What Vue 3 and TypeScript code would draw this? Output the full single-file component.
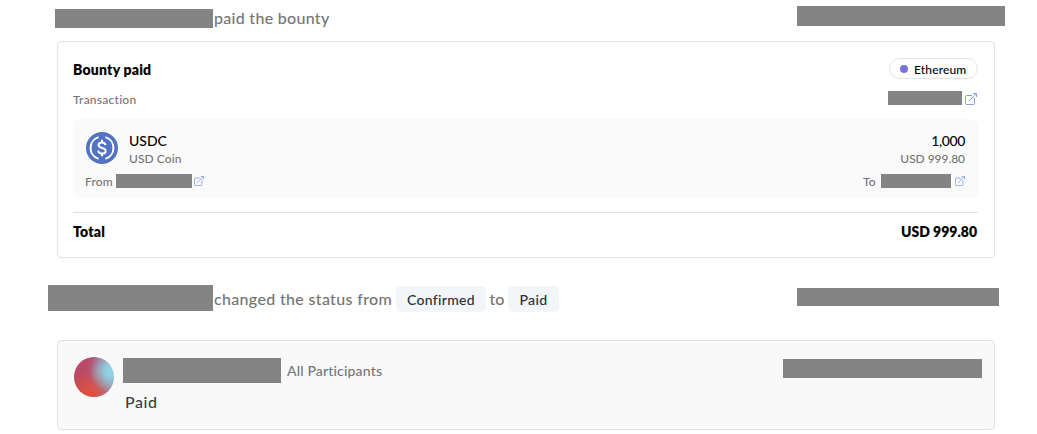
<script setup lang="ts">
import { defineComponent, h } from 'vue'

interface StatusChange { from: string; to: string }
const status: StatusChange = { from: 'Confirmed', to: 'Paid' }
const total = 'USD 999.80'

const LinkIcon = defineComponent({
  props: { size: { type: Number, default: 12 } },
  setup(props) {
    return () => h('svg', { width: props.size, height: props.size, viewBox: '0 0 12 12', fill: 'none', stroke: '#7f9be8', 'stroke-width': 0.95 }, [
      h('path', { d: 'M7 2.5H1.6Q.5 2.5.5 3.6V10.4Q.5 11.5 1.6 11.5H8.4Q9.5 11.5 9.5 10.4V5M3.7 8.3 11.3.7M8 .5H11.5V4' }),
    ])
  },
})
</script>

<template>
  <main class="timeline">
    <header class="event event-paid">
      <span class="mask author"></span>
      <span class="action paid-action">paid the bounty</span>
      <span class="mask date"></span>
    </header>

    <section class="card bounty">
      <div class="row heading">
        <strong class="bold bounty-title">Bounty paid</strong>
        <span class="network"><i class="dot"></i><span>Ethereum</span></span>
      </div>
      <div class="row transaction">
        <span class="small">Transaction</span>
        <span class="link"><span class="mask hash"></span><LinkIcon :size="12" /></span>
      </div>
      <div class="payment">
        <div class="asset">
          <svg class="coin" width="32" height="32" viewBox="0 0 32 32">
            <circle cx="16" cy="16" r="16" fill="#5272c3" />
            <g fill="none" stroke="#fff" stroke-width="2">
              <path d="M12.6 5.1A11.4 11.4 0 0 0 12.6 26.9M19.4 5.1A11.4 11.4 0 0 1 19.4 26.9" />
              <path d="M19.5 13.1C19.4 11.3 18 10.4 16 10.4C13.9 10.4 12.5 11.5 12.5 13.1C12.5 17 19.7 14.8 19.7 18.9C19.7 20.5 18.2 21.5 16 21.5C13.7 21.5 12.3 20.5 12.3 18.6M16 7.8V10.4M16 21.5V24.2" />
            </g>
          </svg>
          <div class="asset-name">
            <span class="token">USDC</span>
            <span class="small coin-name">USD Coin</span>
          </div>
          <div class="amount">
            <span class="token number">1,000</span>
            <span class="small value">{{ total }}</span>
          </div>
        </div>
        <div class="row parties">
          <span class="link"><span class="small from">From</span><span class="mask sender"></span><LinkIcon :size="10" /></span>
          <span class="link"><span class="small to-label">To</span><span class="mask receiver"></span><LinkIcon :size="10" /></span>
        </div>
      </div>
      <div class="row total">
        <strong class="bold total-label">Total</strong>
        <strong class="bold total-value">{{ total }}</strong>
      </div>
    </section>

    <div class="event event-status">
      <span class="mask author"></span>
      <span class="action changed">changed the status from</span>
      <span class="chip confirmed">{{ status.from }}</span>
      <span class="action to">to</span>
      <span class="chip paid">{{ status.to }}</span>
      <span class="mask date"></span>
    </div>

    <article class="card comment">
      <span class="avatar"></span>
      <div class="comment-body">
        <div class="comment-head">
          <span class="mask author"></span>
          <span class="audience">All Participants</span>
          <span class="mask date"></span>
        </div>
        <p>Paid</p>
      </div>
    </article>
  </main>
</template>

<style>
body { margin: 0; background: #fff; overflow: hidden; }
</style>

<style scoped>
.timeline { width: 1037px; height: 434px; box-sizing: border-box; font-family: Lato, "Open Sans", sans-serif; font-weight: 500; color: #050505; font-variant-ligatures: none; overflow: hidden; }
.timeline *, .card { box-sizing: border-box; }
.mask { display: block; flex: none; background: #848484; }
.row, .event, .link, .network, .asset, .comment-head { display: flex; }
.row { justify-content: space-between; }
.event, .action { white-space: nowrap; }
.action { font-size: 16px; line-height: 20px; color: #757575; }
.date { margin-left: auto; }
.event-paid { height: 41px; padding: 6px 32px 0 55px; }
.event-paid .author { width: 158px; height: 19px; margin-top: 3px; }
.event-paid .date { width: 208px; height: 20px; }
.paid-action { margin: 2px 0 0 1px; letter-spacing: .29px; }
.card { width: 938px; margin-left: 57px; border: 1px solid #e2e2e2; border-radius: 4px; }
.bounty { height: 217px; padding: 16px 16px 0 15px; }
.bold { font-size: 14px; line-height: 18px; font-weight: 800; }
.small { font-size: 12px; line-height: 16px; color: #757575; letter-spacing: .2px; white-space: nowrap; }
.heading { height: 33px; }
.bounty-title { margin-top: 3px; letter-spacing: .2px; }
.network { width: 89px; height: 21px; border: 1px solid #e2e4ec; border-radius: 11px; padding-left: 10px; align-items: center; font-size: 12px; line-height: 16px; letter-spacing: .15px; }
.network span { margin-top: 2px; }
.dot { width: 8px; height: 8px; margin-right: 6px; border-radius: 50%; background: #7774d9; }
.transaction { height: 28px; align-items: flex-start; }
.transaction > .small { margin-top: 1px; letter-spacing: .25px; }
.transaction .link { margin-right: 1px; }
.hash { width: 74px; height: 14px; margin-right: 3px; }
.transaction svg { margin-top: 2px; }
.payment { height: 79px; margin-right: -1px; padding: 13px 14px 0 12px; border-radius: 8px; background: #fafafa; }
.asset { height: 42px; }
.coin { margin: 0 11px 0 1px; }
.asset-name, .amount { display: flex; flex-direction: column; }
.amount { margin-left: auto; align-items: flex-end; }
.token { font-size: 14px; line-height: 18px; }
.number { letter-spacing: -.4px; }
.coin-name { margin-top: 1px; letter-spacing: .07px; }
.value { margin-top: 1px; letter-spacing: -.05px; }
.parties { height: 18px; }
.parties .link { height: 16px; align-items: flex-start; }
.parties .mask { height: 14px; }
.parties svg { margin-top: 2px; }
.from { width: 31px; }
.sender { width: 76px; margin-right: 2px; }
.to-label { width: 18px; }
.receiver { width: 70px; margin-right: 4px; }
.total { margin-top: 14px; padding: 10px 1px 0 0; border-top: 1px solid #dedede; }
.total-label { letter-spacing: .2px; }
.event-status { height: 82px; padding: 27px 38px 0 48px; }
.event-status .author { width: 165px; height: 26px; }
.event-status .date { width: 202px; height: 18px; margin-top: 3px; }
.changed { width: 182px; margin: 4px 0 0 1px; letter-spacing: .33px; }
.chip { height: 26px; margin-top: 1px; border-radius: 5px; background: #f3f6f9; color: #28303a; font-size: 14px; line-height: 28px; text-align: center; }
.confirmed { width: 90px; letter-spacing: .3px; }
.to { width: 22px; margin-top: 4px; text-align: center; }
.paid { width: 51px; letter-spacing: .4px; }
.comment { display: flex; height: 90px; padding: 16px 12px 0 16px; background: #f9f9f9; }
.avatar { width: 40px; height: 40px; border-radius: 50%; background: radial-gradient(circle at 94% 35%, #91d0e0 0 12%, transparent 48%), radial-gradient(circle at 38% 95%, #df4f3e 0 10%, transparent 56%), linear-gradient(100deg, #b84b67 30%, #9a83a5 80%); }
.comment-body { flex: 1; margin-left: 9px; }
.comment-head { height: 26px; }
.comment .author { width: 158px; height: 25px; margin-top: 1px; }
.comment .date { width: 199px; height: 19px; margin-top: 2px; }
.audience { margin: 5px 0 0 6px; font-size: 14px; line-height: 18px; color: #727680; letter-spacing: .17px; }
p { margin: 9px 0 0 2px; font-size: 16px; line-height: 20px; color: #3b3d43; letter-spacing: .6px; }
</style>
